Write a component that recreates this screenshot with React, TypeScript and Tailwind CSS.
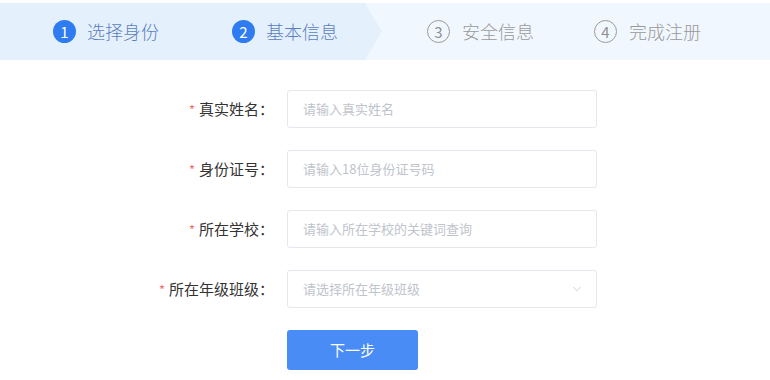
import React from 'react';
import { ChevronDown } from 'lucide-react';

const FONT = { fontFamily: '"Microsoft YaHei", "Noto Sans CJK SC", "Noto Sans", sans-serif' };

const StepDone = ({ n, label, className = '' }: { n: number; label: string; className?: string }) => (
  <div className={`flex items-center gap-[11px] ${className}`}>
    <span className="w-[23px] h-[23px] rounded-full bg-[#2f7cf0] text-white text-[15px] leading-none flex items-center justify-center">
      {n}
    </span>
    <span className="text-[18px] text-[#5a7fbe] font-light">{label}</span>
  </div>
);

const StepTodo = ({ n, label, className = '' }: { n: number; label: string; className?: string }) => (
  <div className={`flex items-center gap-[12px] ${className}`}>
    <span className="w-[23px] h-[23px] rounded-full border border-[#9a9a9a] text-[#8f8f8f] text-[15px] leading-none flex items-center justify-center">
      {n}
    </span>
    <span className="text-[18px] text-[#999999] font-light">{label}</span>
  </div>
);

const Field = ({ label, placeholder, select }: { label: string; placeholder: string; select?: boolean }) => (
  <div className="flex items-center">
    <label className="w-[274px] text-right text-[15px] text-[#333333]">
      <span className="text-[#f56c6c] mr-[4px] text-[13px]">*</span>
      {label}：
    </label>
    <div className="ml-[13px] w-[310px] h-[38px] border border-[#e4e7ed] rounded-[3px] flex items-center pl-[15px] pr-[12px] justify-between">
      <span className="text-[13px] text-[#c0c4cc]">{placeholder}</span>
      {select && <ChevronDown size={14} strokeWidth={1.3} className="text-[#c0c4cc]" />}
    </div>
  </div>
);

export default function App() {
  return (
    <div className="w-[770px] h-[380px] bg-white overflow-hidden" style={FONT}>
      <div className="pt-[3px]">
        <div className="flex h-[57px] bg-[#f1f7fe]">
          <div className="w-[382px] h-full bg-[#e5f0fd] flex items-center pl-[53px] [clip-path:polygon(0_0,calc(100%-17px)_0,100%_50%,calc(100%-17px)_100%,0_100%)]">
            <StepDone n={1} label="选择身份" />
            <StepDone n={2} label="基本信息" className="ml-[73px]" />
          </div>
          <div className="flex-1 flex items-center pl-[45px]">
            <StepTodo n={3} label="安全信息" />
            <StepTodo n={4} label="完成注册" className="ml-[60px]" />
          </div>
        </div>
      </div>

      <div className="mt-[30px] flex flex-col gap-[22px]">
        <Field label="真实姓名" placeholder="请输入真实姓名" />
        <Field label="身份证号" placeholder="请输入18位身份证号码" />
        <Field label="所在学校" placeholder="请输入所在学校的关键词查询" />
        <Field label="所在年级班级" placeholder="请选择所在年级班级" select />
      </div>

      <div className="mt-[22px] pl-[287px]">
        <button className="w-[131px] h-[40px] rounded-[3px] bg-[#4a8cf6] text-white text-[15px]">下一步</button>
      </div>
    </div>
  );
}
